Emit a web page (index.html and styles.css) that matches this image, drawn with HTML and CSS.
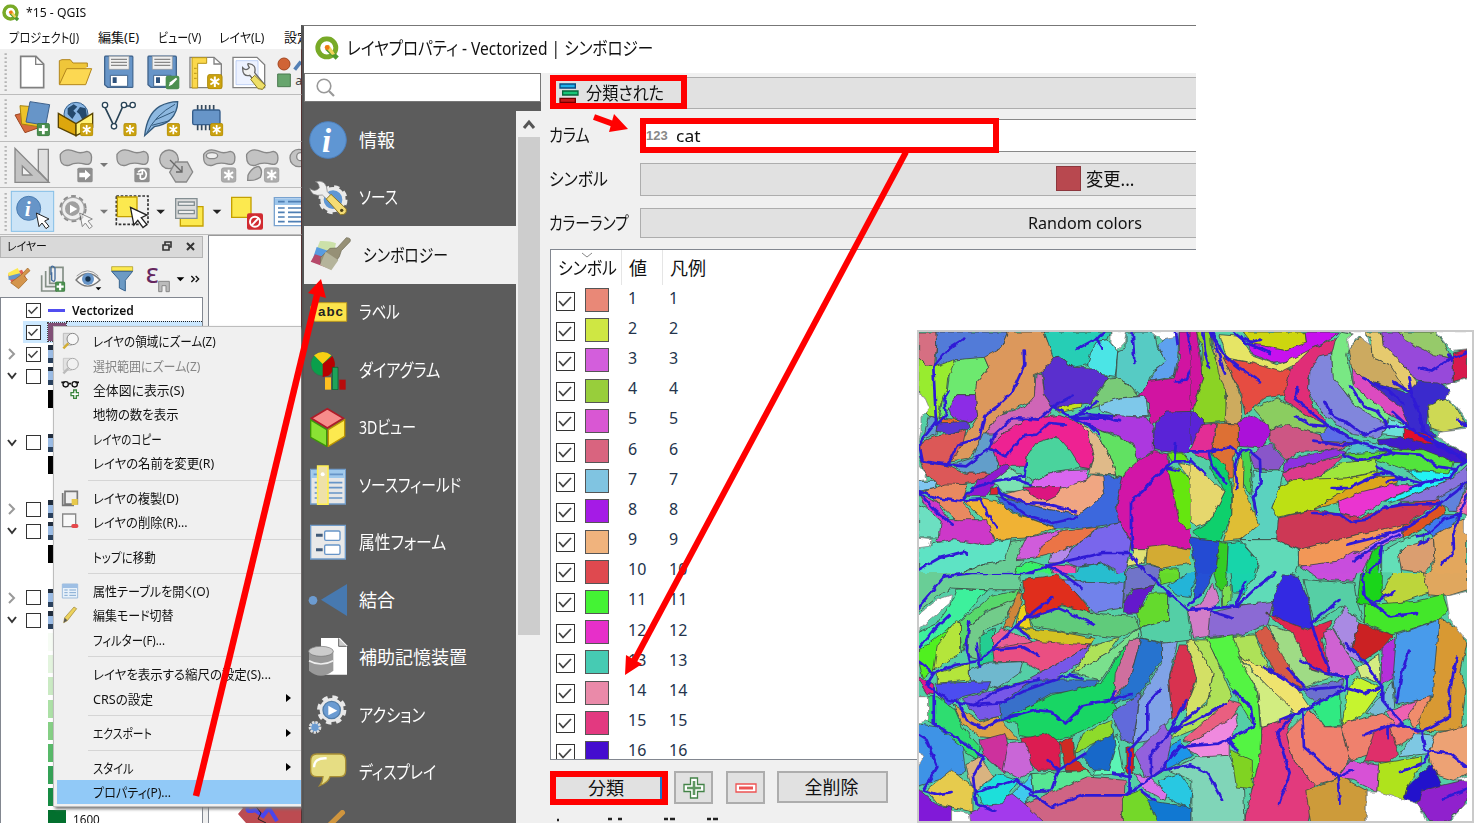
FILE: index.html
```html
<!DOCTYPE html>
<html lang="ja">
<head>
<meta charset="utf-8">
<title>QGIS</title>
<link rel="stylesheet" href="styles.css">
</head>
<body>
<svg class="defs" width="0" height="0">
  <defs>
    <symbol id="new" viewBox="0 0 38 38"><rect x="1" y="1" width="36" height="36" rx="6" fill="#cba20f" stroke="#a88500" stroke-width="2"/><path d="M19 6v26M8 12l22 14M30 12L8 26" stroke="#fff" stroke-width="5"/></symbol>
    <symbol id="newgrey" viewBox="0 0 38 38"><rect x="1" y="1" width="36" height="36" rx="6" fill="#adadad" stroke="#999" stroke-width="2"/><path d="M19 6v26M8 12l22 14M30 12L8 26" stroke="#fff" stroke-width="5"/></symbol>
    <symbol id="plus" viewBox="0 0 38 38"><rect x="1" y="1" width="36" height="36" rx="6" fill="#4c8f50" stroke="#34743a" stroke-width="2"/><path d="M19 6v26M6 19h26" stroke="#fff" stroke-width="8"/></symbol>
    <symbol id="cursor" viewBox="0 0 44 54"><path d="M3 3l38 18-13 6 13 16-9 7-12-17-9 11z" fill="#fff" stroke="#222" stroke-width="3"/></symbol>
    <symbol id="floppy" viewBox="0 0 90 98"><path d="M6 2h78q4 0 4 4v88q0 2-3 2H12L3 88V6q0-4 3-4z" fill="#6795c8" stroke="#41648c" stroke-width="4"/><path d="M16 3h60v39H16z" fill="#f0f0f0" stroke="#999" stroke-width="2"/><path d="M22 12h48M22 21h48M22 30h48" stroke="#888" stroke-width="4"/><path d="M20 60h52v33H20z" fill="#fff" stroke="#41648c" stroke-width="3"/><path d="M27 66h12v17H27z" fill="#2e527c"/></symbol>
    <symbol id="q" viewBox="0 0 72 70"><circle cx="34" cy="33" r="26" fill="none" stroke="#78aa27" stroke-width="14"/><path d="M34 34l30 29" stroke="#4f9a2c" stroke-width="13"/><path d="M28 29l12-5 18 27-9 3z" fill="#f0d35a"/><circle cx="35" cy="32" r="7" fill="#ee7913"/></symbol>
  </defs>
</svg>
<main class="stage">
  <section class="main-window">
    <header class="titlebar"><svg class="logo" viewBox="0 0 72 70"><use href="#q"/></svg><span data-w="60">*15 - QGIS</span></header>
    <nav class="menubar">
      <div class="m1"><span data-w="70">プロジェクト(J)</span></div><div class="m2"><span data-w="41">編集(E)</span></div><div class="m3"><span data-w="43">ビュー(V)</span></div><div class="m4"><span data-w="45">レイヤ(L)</span></div><div class="m5"><span data-w="26">設定</span></div>
    </nav>
    <div class="toolbar tb1">
      <svg viewBox="0 147 903 138" width="301" height="46">
        <path d="M17 160v114" class="grip"/>
        <path d="M62 169h46l23 23v71H62z" fill="#fff" stroke="#808080" stroke-width="5"/><path d="M107 170v23h23" fill="none" stroke="#808080" stroke-width="4"/>
        <path d="M178 252V182l8-3h25l8 10h43v12" fill="#efc63a" stroke="#b3861c" stroke-width="3"/><path d="M178 254l22-48h75l-18 48z" fill="#fcd852" stroke="#b3861c" stroke-width="3"/>
        <use href="#floppy" x="311" y="166" width="90" height="98"/>
        <use href="#floppy" x="441" y="166" width="90" height="98"/>
        <rect x="497" y="227" width="41" height="41" rx="6" fill="#4c8f50"/><path d="M506 259l4-12 18-14 4 4-16 17z" fill="#fff"/>
        <path d="M570 172h72l22 20v71h-94z" fill="#fff" stroke="#808080" stroke-width="4"/><path d="M642 172v20h22" fill="none" stroke="#808080" stroke-width="4"/><path d="M576 173h44v17h-27v74h-17z" fill="#fbd84b" stroke="#b89618" stroke-width="3"/><path d="M582 205h8M582 220h8M582 235h8" stroke="#b89618" stroke-width="3"/>
        <use href="#new" x="620" y="222" width="49" height="46"/>
        <path d="M699 172h72l23 22v69h-95z" fill="#fff" stroke="#808080" stroke-width="4"/><path d="M708 182h66v72h-66z" fill="#edf2ff" stroke="#a8c0f0" stroke-width="2"/><path d="M728 203q10 12 20 0-8-14-2-12 24 2 18 27l30 36-10 12-35-40q-22 5-21-23z" fill="#f2f2f2" stroke="#666" stroke-width="4"/><path d="M764 226l32 30-8 12-14-2-22-28z" fill="#eedf68" stroke="#8c7c22" stroke-width="3"/>
        <circle cx="852" cy="192" r="18" fill="#d06436" stroke="#a3451e" stroke-width="3"/><path d="M833 222h38v38h-38z" fill="#67a56d" stroke="#4b7a50" stroke-width="3"/><path d="M884 209l19-24" stroke="#5480b5" stroke-width="11"/><text x="886" y="256" font-size="38" fill="#444">a</text>
      </svg>
    </div>
    <div class="toolbar tb2">
      <svg viewBox="0 285 903 141" width="301" height="47">
        <path d="M17 298v114" class="grip"/>
        <path d="M45 345l60-15 20 50-50 18z" fill="#d66a3c" stroke="#9c4521" stroke-width="3"/><path d="M60 317l60 5-5 58-50-8z" fill="#edc32a" stroke="#a5830e" stroke-width="3"/><path d="M90 305l59 9-12 62-59-10z" fill="#6795c8" stroke="#3e618c" stroke-width="3"/><use href="#plus" x="110" y="369" width="40" height="40"/>
        <circle cx="228" cy="343" r="36" fill="#88b5e3" stroke="#35618d" stroke-width="3"/><path d="M203 325l18-12 11 7-12 12 8 8-11 17-14-15zM240 321l17 4 4 24-13 12-10-19-8-7z" fill="#24496d"/><path d="M175 340l53 31v36l-53-25z" fill="#dda70d" stroke="#594400" stroke-width="4"/><path d="M278 340l-50 31v36l50-25z" fill="#fff176" stroke="#594400" stroke-width="4"/><use href="#new" x="240" y="369" width="40" height="40"/>
        <path d="M315 322l27 56 27-60h29" fill="none" stroke="#284255" stroke-width="5"/><g fill="#fff" stroke="#284255" stroke-width="4"><circle cx="315" cy="315" r="8"/><circle cx="342" cy="379" r="8"/><circle cx="372" cy="315" r="8"/><circle cx="398" cy="315" r="8"/></g><use href="#new" x="370" y="369" width="40" height="40"/>
        <path d="M434 407q7-65 45-88 27-14 54-14 0 30-21 53-19 18-49 22z" fill="#8db8e0" stroke="#335a7d" stroke-width="4"/><path d="M440 400q25-55 85-87M455 376l55-14M467 359l56-25" fill="none" stroke="#335a7d" stroke-width="3"/><use href="#new" x="500" y="369" width="40" height="40"/>
        <path d="M593 315v76M605 315v76M617 315v76M629 315v76M641 315v50" stroke="#35485b" stroke-width="5"/><rect x="578" y="330" width="82" height="44" rx="5" fill="#6795c8" stroke="#355d8b" stroke-width="4"/><use href="#new" x="630" y="369" width="40" height="40"/>
      </svg>
    </div>
    <div class="toolbar tb3">
      <svg viewBox="0 426 903 138" width="301" height="46">
        <path d="M17 438v114" class="grip"/>
        <g fill="#c3c3c3" stroke="#888" stroke-width="4">
          <path d="M115 448h30v96l-30-32z" fill="#e0e0e0"/><path d="M45 445v102h102zM67 498l28 27H67z" fill-rule="evenodd"/>
          <path id="blob" d="M181 463q15-22 45-8 14 7 35-1 17 3 13 28-2 14-20 10-27-7-47 4-29 5-26-33z"/>
          <use href="#blob" x="170"/><circle cx="507" cy="478" r="28"/><path d="M527 486h35l16 30-19 30h-32l-18-29z"/>
          <use href="#blob" x="430"/><ellipse cx="636" cy="467" rx="17" ry="9" fill="#eee"/><use href="#blob" x="559"/><path d="M744 526q11-24 32-27 14 10 5 33-14 11-38 9z"/><circle cx="896" cy="474" r="26"/><circle cx="902" cy="470" r="12" fill="#eee"/>
        </g>
        <path d="M510 480l36 36m0-18v18h-18" fill="none" stroke="#666" stroke-width="4"/>
        <rect x="232" y="503" width="46" height="44" rx="5" fill="#8f8f8f"/><path d="M238 518h17v-9l17 16-17 16v-9h-17z" fill="#fff"/>
        <path d="M300 489h24l-12 12z" fill="#777"/><rect x="403" y="503" width="46" height="44" rx="5" fill="#8f8f8f"/><path d="M414 516q20-15 25 6 0 18-18 15M410 522h17v-13M421 537v-13" fill="none" stroke="#fff" stroke-width="5"/>
        <use href="#newgrey" x="662" y="502" width="48" height="46"/><use href="#newgrey" x="791" y="502" width="48" height="46"/>
      </svg>
    </div>
    <div class="toolbar tb4">
      <svg viewBox="0 564 903 141" width="301" height="47">
        <path d="M17 579v114" class="grip"/><rect x="34" y="574" width="127" height="120" fill="#cce4f7" stroke="#84bfe8" stroke-width="3"/>
        <circle cx="86" cy="625" r="36" fill="#6795c8" stroke="#4a7db2" stroke-width="3"/><text x="74" y="648" font-family="Liberation Serif" font-weight="bold" font-style="italic" font-size="64" fill="#fff">i</text><use href="#cursor" x="106" y="636" width="44" height="54"/>
        <circle cx="219" cy="626" r="34" fill="#e8e8e8" stroke="#8c8c8c" stroke-width="14" stroke-dasharray="13 9"/><circle cx="219" cy="626" r="34" fill="#eee" stroke="#a4a4a4" stroke-width="4"/><circle cx="217" cy="626" r="22" fill="#a0a0a0"/><path d="M210 614l22 13-22 13z" fill="#fff"/><use href="#cursor" x="236" y="636" width="44" height="54" opacity=".5"/>
        <path d="M300 629h24l-12 12z" fill="#777"/><path d="M469 629h26l-13 13zM638 629h26l-13 13z" fill="#222"/>
        <path d="M349 588h95v85h-95z" fill="none" stroke="#333" stroke-width="5" stroke-dasharray="8 5"/><path d="M352 591h59v59h-59z" fill="#fce94f" stroke="#c4a000" stroke-width="4"/><use href="#cursor" x="385" y="618" width="62" height="70"/>
        <path d="M541 620h68v58h-68z" fill="#fce94f" stroke="#c4a000" stroke-width="4"/><path d="M527 596h64v59h-64z" fill="#ddd" stroke="#848f93" stroke-width="4"/><path d="M535 606h48v10h-48zM535 631h48v10h-48z" fill="#eee" stroke="#848f93" stroke-width="4"/>
        <path d="M695 592h58v60h-58z" fill="#fce94f" stroke="#c4a000" stroke-width="4"/><rect x="741" y="640" width="48" height="49" rx="6" fill="#d12b31"/><circle cx="765" cy="665" r="15" fill="none" stroke="#fff" stroke-width="6"/><path d="M755 676l21-22" stroke="#fff" stroke-width="6"/>
        <path d="M823 593h100v84H823z" fill="#fff" stroke="#78a2cf" stroke-width="4"/><path d="M825 595h90v20h-90z" fill="#9cc5eb"/><path d="M834 605h20M864 605h40M834 624h20M864 624h40M834 637h20M864 637h40M834 651h20M864 651h40M834 665h20M864 665h40" stroke="#4e7fb4" stroke-width="5"/>
      </svg>
    </div>
    <div class="workspace">
      <aside class="layers">
        <header class="dock-title"><span data-w="40">レイヤー</span><svg width="44" height="20" viewBox="0 0 44 20"><path d="M5 8h6v5H5zM7 8V5h6v5h-2" fill="none" stroke="#333" stroke-width="1.6"/><path d="M29 6l7 7m0-7l-7 7" stroke="#333" stroke-width="2"/></svg></header>
        <svg class="dock-tools" viewBox="0 303 609 117" width="203" height="39">
          <path d="M24 353l42-15 14 28-44 14z" fill="#e25f54"/><path d="M24 348l29-15 10 20-36 8z" fill="#fce94f"/><path d="M25 358l34-9 7 14-40 6z" fill="#6495c9"/><path d="M90 341L73 357l9 11-26 27-24-18 32-24 19-20z" fill="#d4954c" stroke="#9c6223" stroke-width="2"/>
          <path d="M125 355v47h46M137 342v47h50M149 331h40v48h-40z" fill="#f0f0f0" stroke="#848f86" stroke-width="5"/><path d="M153 354v-21q2-11 12 0v33q-1 12-10 3v-23" fill="none" stroke="#436b9c" stroke-width="4"/><use href="#plus" x="165" y="373" width="31" height="32"/>
          <path d="M228 369q36-39 72 0-38 37-72 0z" fill="#f8f8f8" stroke="#777" stroke-width="4"/><circle cx="264" cy="366" r="18" fill="#6795c8"/><circle cx="264" cy="366" r="8" fill="#17334f"/><path d="M230 357q34-31 65 0" fill="none" stroke="#999" stroke-width="3"/><path d="M287 391h17l-9 9z"/>
          <path d="M335 329h63v13h-63z" fill="#fce94f" stroke="#a28f16" stroke-width="2"/><path d="M335 343h63l-22 27v32l-18-9v-24z" fill="#6c9ac4" stroke="#38638e" stroke-width="3"/>
          <text x="437" y="377" font-family="Noto Sans" font-size="82" fill="#65275f">ε</text><path d="M476 404v-31h32v31h-10v-18h-12v18z" fill="#bbb" stroke="#888" stroke-width="3"/><path d="M530 361h23l-12 12z"/><path d="M574 357l9 9-9 9m13-18l9 9-9 9" fill="none" stroke="#111" stroke-width="4"/>
        </svg>
        <div class="tree" id="tree"></div>
      </aside>
      <div class="canvas"><svg viewBox="0 0 93 19" width="93" height="19"><path d="M28 0l6 4-5 6 8 9h56V0z" fill="#bc4b51"/><path d="M40 0q-5 10 6 6l8 6 6-8 8 13" fill="none" stroke="#4a45ed" stroke-width="4"/><path d="M45 0l7 9-3 6 8 4" fill="none" stroke="#222"/></svg></div>
    </div>
    <div class="context-menu">
      <div class="item"><svg class="mi" viewBox="0 0 54 54"><path d="M7 4h24v36H7z" fill="#ddd" stroke="#aaa" stroke-width="2"/><circle cx="35" cy="21" r="17" fill="#f7f7f7" stroke="#888" stroke-width="3"/><path d="M22 34L7 49" stroke="#d2ad35" stroke-width="7"/></svg><span data-w="123">レイヤの領域にズーム(Z)</span></div>
      <div class="item off"><svg class="mi" viewBox="0 0 54 54"><path d="M7 4h24v36H7z" fill="#e2e2e2" stroke="#bbb" stroke-width="2"/><circle cx="35" cy="21" r="17" fill="#f1f1f1" stroke="#aaa" stroke-width="3"/><path d="M22 34L7 49" stroke="#bbb" stroke-width="7"/></svg><span data-w="107">選択範囲にズーム(Z)</span></div>
      <div class="item"><svg class="mi" viewBox="0 0 54 54"><path d="M1 4h10m13 4h6M43 4h11" stroke="#111" stroke-width="5"/><circle cx="14" cy="10" r="8" fill="none" stroke="#111" stroke-width="4"/><circle cx="41" cy="10" r="8" fill="none" stroke="#111" stroke-width="4"/><path d="M38 27h8v8h8v9h-8v8h-8v-8h-8v-9h8z" fill="#fff" stroke="#3a843e" stroke-width="4"/></svg><span data-w="91">全体図に表示(S)</span></div>
      <div class="item"><span data-w="86">地物の数を表示</span></div>
      <div class="item"><span data-w="69">レイヤのコピー</span></div>
      <div class="item"><span data-w="121">レイヤの名前を変更(R)</span></div>
      <hr>
      <div class="item"><svg class="mi" viewBox="0 0 54 54"><path d="M5 12v37h34M12 7h37v38H12z" fill="#eee" stroke="#777" stroke-width="5"/><rect x="32" y="30" width="18" height="18" fill="#e8c94b"/></svg><span data-w="86">レイヤの複製(D)</span></div>
      <div class="item"><svg class="mi" viewBox="0 0 54 54"><path d="M5 3h39v38H5z" fill="#f8f8f8" stroke="#888" stroke-width="4"/><rect x="31" y="33" width="21" height="12" rx="5" fill="#e5484b"/></svg><span data-w="95">レイヤの削除(R)...</span></div>
      <hr>
      <div class="item"><span data-w="63">トップに移動</span></div>
      <hr>
      <div class="item"><svg class="mi" viewBox="0 0 54 54"><path d="M4 6h46v42H4z" fill="#e8f1fa" stroke="#9ebcdc" stroke-width="3"/><path d="M4 6h46v12H4z" fill="#9ebfe4"/><path d="M10 24h10M25 24h20M10 32h10M25 32h20M10 40h10M25 40h20" stroke="#82a9d1" stroke-width="3"/></svg><span data-w="116">属性テーブルを開く(O)</span></div>
      <div class="item"><svg class="mi" viewBox="0 0 54 54"><path d="M39 3l8 5-28 36-11 6 3-15z" fill="#ecd25c" stroke="#998133" stroke-width="2"/><path d="M8 50l3-15 8 8z" fill="#555"/></svg><span data-w="80">編集モード切替</span></div>
      <div class="item"><span data-w="72">フィルター(F)...</span></div>
      <hr>
      <div class="item"><span data-w="178">レイヤを表示する縮尺の設定(S)...</span></div>
      <div class="item"><span data-w="60">CRSの設定</span><i class="sub"></i></div>
      <hr>
      <div class="item"><span data-w="59">エクスポート</span><i class="sub"></i></div>
      <hr>
      <div class="item"><span data-w="41">スタイル</span><i class="sub"></i></div>
      <div class="item hot"><span data-w="78">プロパティ(P)...</span></div>
    </div>
  </section>

  <section class="dialog">
    <header class="dialog-title"><svg class="logo" viewBox="0 0 72 70"><use href="#q"/></svg><span data-w="306">レイヤプロパティ - Vectorized | シンボロジー</span></header>
    <div class="dialog-body">
      <div class="side">
        <div class="search"><svg width="24" height="24" viewBox="0 0 24 24"><circle cx="10" cy="10" r="6.8" fill="none" stroke="#999" stroke-width="1.6"/><path d="M15 15l5 5" stroke="#999" stroke-width="2.2"/></svg></div>
        <div class="side-row">
          <nav class="tabs">
            <div class="tab"><svg viewBox="0 0 120 120"><circle cx="60" cy="60" r="55" fill="#5f96d3" stroke="#4d7fba" stroke-width="3"/><text x="42" y="95" font-family="Liberation Serif" font-weight="bold" font-style="italic" font-size="98" fill="#fff">i</text></svg><span data-w="36">情報</span></div>
            <div class="tab"><svg viewBox="0 0 120 120"><circle cx="75" cy="68" r="33" fill="#5f96d3" stroke="#e9e9e9" stroke-width="10"/><circle cx="75" cy="68" r="39" fill="none" stroke="#e9e9e9" stroke-width="9" stroke-dasharray="16 15"/><path d="M5 34q15 13 29-1-2-18-13-19Q56 5 58 44L76 62 66 76 43 54Q11 60 5 34z" fill="#ededed" stroke="#777" stroke-width="2"/><path d="M55 66l14-14 46 44q2 19-18 17z" fill="#f4dc74" stroke="#8a7625" stroke-width="3"/><circle cx="101" cy="100" r="5" fill="#4e421a"/></svg><span data-w="39">ソース</span></div>
            <div class="tab active"><svg viewBox="0 0 132 120"><path d="M36 18q30-1 48 7L68 92 14 73z" fill="#cce1a9"/><path d="M26 36l54 18-12 40-54-22z" fill="#589be0"/><path d="M21 58l51 16-7 27-57-21z" fill="#b6496a"/><path d="M115 8q16 1 11 12L100 47l-6 18-26 36-30-15-1-18 29-28 21-1z" fill="#969076" stroke="#6d6955" stroke-width="2"/><path d="M53 50l38 26-21 30-34-16z" fill="#b5b49b"/></svg><span data-w="85">シンボロジー</span></div>
            <div class="tab"><svg viewBox="0 0 120 120"><path d="M20 32h96v56H20L8 76V44z" fill="#fce34c" stroke="#bd9a1e" stroke-width="3"/><text x="30" y="71" font-family="Liberation Sans" font-weight="bold" font-size="40" textLength="75" fill="#222">abc</text></svg><span data-w="41">ラベル</span></div>
            <div class="tab"><svg viewBox="0 0 120 120"><circle cx="44" cy="42" r="36" fill="#0a9f4b" stroke="#555" stroke-width="2"/><path d="M44 42L18 16q27-20 52 0z" fill="#f8cf13"/><path d="M44 42l29-24q20 35-12 59l-17 4z" fill="#b90000"/><path d="M51 82h18v37H51z" fill="#ffbf21"/><path d="M73 52h17v67H73z" fill="#1fa35a" stroke="#075824" stroke-width="2"/><path d="M94 89h19v30H94z" fill="#b80c0c"/></svg><span data-w="81">ダイアグラム</span></div>
            <div class="tab"><svg viewBox="0 0 120 120"><path d="M58 5l48 29-48 29L10 34z" fill="#f78c8b" stroke="#af1c28" stroke-width="5"/><path d="M8 39l48 29v50L8 91z" fill="#8ae234" stroke="#3d9507" stroke-width="4"/><path d="M61 68l49-30v50l-49 30z" fill="#fce94f" stroke="#bd9500" stroke-width="4"/></svg><span data-w="57">3Dビュー</span></div>
            <div class="tab"><svg viewBox="0 0 120 120"><path d="M8 13h104v104H8z" fill="#e7e7e7" stroke="#719cc9" stroke-width="4"/><path d="M10 15h100v24H10z" fill="#9fc9ec"/><path d="M17 28h20m28 0h40M20 53h83M20 68h83M20 84h83M20 99h83" stroke="#6795c8" stroke-width="5"/><path d="M29 3h31v115H29z" fill="#efe1a8" stroke="#fff052" stroke-width="5"/><circle cx="44" cy="28" r="6" fill="#fff"/></svg><span data-w="102">ソースフィールド</span></div>
            <div class="tab"><svg viewBox="0 0 120 120"><path d="M8 10h104v101H8z" fill="#e9e9e9" stroke="#719cc9" stroke-width="4"/><path d="M24 40h20M24 83h20" stroke="#415b79" stroke-width="9"/><rect x="50" y="27" width="46" height="28" rx="4" fill="#fff" stroke="#6795c8" stroke-width="4"/><rect x="50" y="69" width="46" height="28" rx="4" fill="#fff" stroke="#6795c8" stroke-width="4"/></svg><span data-w="87">属性フォーム</span></div>
            <div class="tab"><svg viewBox="0 0 120 120"><circle cx="15" cy="61" r="13" fill="#6c9bd0"/><path d="M39 59L117 12v96z" fill="#4779b0"/></svg><span data-w="36">結合</span></div>
            <div class="tab"><svg viewBox="0 0 120 120"><path d="M39 3h57l21 22v88H39z" fill="#fff"/><path d="M92 4v24h24" fill="#ccc" stroke="#666" stroke-width="3"/><path d="M3 42v59q35 30 73 0V42z" fill="#999"/><ellipse cx="39" cy="43" rx="37" ry="15" fill="#ccc" stroke="#777" stroke-width="2"/><path d="M3 71q35 20 73 0" fill="none" stroke="#eee" stroke-width="5"/></svg><span data-w="108">補助記憶装置</span></div>
            <div class="tab"><svg viewBox="0 0 120 120"><circle cx="71" cy="45" r="33" fill="#e8e8e8" stroke="#e8e8e8" stroke-width="6"/><circle cx="71" cy="45" r="38" fill="none" stroke="#e8e8e8" stroke-width="12" stroke-dasharray="16 14"/><circle cx="71" cy="45" r="26" fill="#6a9bd2" stroke="#527da8" stroke-width="4"/><path d="M61 32l27 15-27 14z" fill="#fff"/><circle cx="21" cy="97" r="15" fill="#6a9bd2" stroke="#ddd" stroke-width="8" stroke-dasharray="7 3"/></svg><span data-w="66">アクション</span></div>
            <div class="tab"><svg viewBox="0 0 120 120"><path d="M26 6h69q18 0 18 19v31q0 18-19 18H66q-5 18-31 27 10-13 10-27H27Q8 74 8 57V26Q8 6 26 6z" fill="#e6dd83" stroke="#a88e35" stroke-width="4"/><path d="M18 46q0-29 38-27" fill="none" stroke="#fff" stroke-width="7"/></svg><span data-w="77">ディスプレイ</span></div>
            <div class="tab"><svg viewBox="0 0 120 120"><path d="M103 8L70 40 40 70" stroke="#cf953e" stroke-width="16" stroke-linecap="round"/></svg></div>
          </nav>
          <div class="scroll"><svg width="22" height="26" viewBox="0 0 22 26"><path d="M6 17l5-6 5 6" fill="none" stroke="#555" stroke-width="3"/></svg><div class="thumb"></div></div>
        </div>
      </div>
      <div class="form">
        <div class="combo"><svg width="22" height="22" viewBox="0 0 66 66"><path d="M6 6h46v12H6z" fill="#20b0e9" stroke="#074b83" stroke-width="4"/><path d="M14 27h46v12H14z" fill="#18c577" stroke="#05663a" stroke-width="4"/><path d="M6 49h46v12H6z" fill="#c51a1a" stroke="#730000" stroke-width="4"/></svg><span data-w="78">分類された</span><b class="mark"></b></div>
        <div class="field f1"><label><span data-w="41">カラム</span></label><div class="input"><em>123</em><span data-w="24">cat</span><b class="mark"></b></div></div>
        <div class="field f2"><label><span data-w="59">シンボル</span></label><div class="btn"><i class="color"></i><span data-w="48">変更...</span></div></div>
        <div class="field f3"><label><span data-w="80">カラーランプ</span></label><div class="btn"><span data-w="114">Random colors</span></div></div>
        <div class="list">
          <svg class="sort" width="12" height="6" viewBox="0 0 12 6"><path d="M1 1l5 4 5-4" fill="none" stroke="#888"/></svg>
          <div class="list-head"><div><span data-w="59">シンボル</span></div><div><span data-w="18">値</span></div><div><span data-w="36">凡例</span></div></div>
          <div id="classes"></div>
        </div>
        <div class="actions">
          <button class="classify"><span data-w="36">分類</span></button>
          <button class="sq"><svg width="24" height="24" viewBox="0 0 24 24"><path d="M8.500 2h7v6.500H22v7h-6.500V22h-7v-6.500H2v-7h6.500z" fill="#fff" stroke="#438347" stroke-width="1.3"/><path d="M12 5v14M5 12h14" stroke="#5f9862" stroke-width="2.600"/></svg></button>
          <button class="sq"><svg width="24" height="24" viewBox="0 0 24 24"><path d="M2 8h20v8H2z" fill="#fff" stroke="#ed5353" stroke-width="1.3"/><path d="M5 12h14" stroke="#ed5353" stroke-width="3"/></svg></button>
          <button class="clear"><span data-w="54">全削除</span></button>
        </div>
        <svg class="cut" width="180" height="5" viewBox="0 0 180 5"><path d="M7 3h2M58 2h4M68 2h4M114 2h4M120 2h5M157 2h4M163 2h5" stroke="#222" stroke-width="2.500"/></svg>
      </div>
    </div>
  </section>

  <svg class="map" width="557" height="493" viewBox="917 330 557 493">
    <defs>
      <filter id="rough" x="0" y="0" width="100%" height="100%" color-interpolation-filters="sRGB"><feTurbulence type="fractalNoise" baseFrequency=".17" numOctaves="1" seed="4"/><feDisplacementMap in="SourceGraphic" scale="5" xChannelSelector="R" yChannelSelector="G"/></filter>
      <clipPath id="ca"><path d="M0 0h822v736H0z"/></clipPath>
      <clipPath id="cb"><path d="M0 0h840v736H0z"/></clipPath>
      <clipPath id="cc"><path d="M0 0h1560v755H0z"/></clipPath>
      <clipPath id="all"><path d="M919 332h548v489H919z"/></clipPath>
    </defs>
    <rect x="918" y="331" width="555" height="491" fill="#fff" stroke="#cacaca" stroke-width="2"/>
    <g clip-path="url(#all)"><g filter="url(#rough)">
      <path d="M912 325h562v503H912z" fill="#54cfa6"/>
      <g id="ga" clip-path="url(#ca)" transform="translate(916 328) scale(.33333)"></g>
      <g id="gb" clip-path="url(#cb)" transform="translate(1190 328) scale(.33333)"></g>
      <g id="gc" clip-path="url(#cc)" transform="translate(916 573) scale(.3559 .3344)"></g>
    </g></g>
  </svg>
  <svg class="arrows" width="1474" height="823" viewBox="0 0 1474 823">
    <g stroke="red" fill="red"><path d="M196 796L317 295" stroke-width="6.500"/><path d="M906 152L633 663" stroke-width="6"/><path d="M594 117l22 8" stroke-width="6"/></g>
    <path d="M321 279l5 19-18-5zM625 675l1-20 16 9zM628 129l-14-15-5 18z" fill="red"/>
  </svg>
</main>
<script src="app.js"></script>
</body>
</html>
```
FILE: styles.css
```css
* { box-sizing: border-box; }
body { margin: 0; background: #fff; font-family: "Noto Sans", "Noto Sans CJK JP", sans-serif; color: #111; overflow: hidden; }
.defs { position: absolute; }
.stage { position: relative; width: 1474px; height: 823px; display: grid; grid-template-columns: 302px 894px; overflow: hidden; }
span[data-w] { display: inline-block; white-space: nowrap; transform-origin: left center; font-feature-settings: "palt"; flex: none; }
svg { display: block; flex: none; overflow: hidden; }

.main-window { position: relative; height: 823px; overflow: hidden; font-size: 13px; line-height: 18px; display: flex; flex-direction: column; }
.titlebar { height: 25px; padding: 0 2px; display: flex; align-items: center; gap: 6px; font-size: 12px; flex: none; }
.titlebar .logo { width: 18px; height: 18px; }
.menubar { height: 24px; display: grid; grid-template-columns: 89px 60px 61px 65px 1fr; padding-left: 9px; align-items: center; border-right: 1px solid #555; flex: none; overflow: hidden; }
.menubar div { overflow: hidden; white-space: nowrap; }
.toolbar { background: #f0f0f0; border-bottom: 1px solid #bcbcbc; border-right: 1px solid #533; flex: none; overflow: hidden; }
.tb1, .tb3 { height: 46px; }
.tb2, .tb4 { height: 47px; }
.grip { stroke: #b4b4b4; stroke-width: 7; stroke-dasharray: 5 7; fill: none; }
.workspace { flex: 1; display: flex; background: #f0f0f0; min-height: 0; border-right: 1px solid #533; }
.layers { width: 203px; display: flex; flex-direction: column; margin-right: 5px; }
.dock-title { height: 22px; flex: none; margin-top: 1px; background: #d9d9d9; border: 1px solid #b4b4b4; display: flex; align-items: center; padding: 0 0 0 6px; font-size: 12px; }
.dock-title svg { margin-left: auto; }
.tree { flex: 1; background: #fff; border: 1px solid #828790; border-bottom: 0; overflow: hidden; padding-top: 1px; }
.node { height: 22.15px; display: flex; align-items: center; padding-left: 4px; font-weight: 600; }
.node .arrow { width: 14px; margin-right: 7px; }
.box { width: 15px; height: 15px; border: 1.5px solid #333; background: #fff; flex: none; }
.node .box { margin-right: 7px; }
.node .none { border-color: transparent; background: none; }
.node .rule { width: 17px; height: 3px; background: #514ef0; margin-right: 7px; }
.node .chip { width: 18px; height: 18px; margin-right: 7px; }
.node.small { font-weight: 400; }
.node.picked { background: linear-gradient(90deg, #fff 22px, #cce8ff 22px); }
.node.picked .chip { outline: 1px dotted #444; background: #804f76; margin-right: 0; }
.node.picked::after { content: ""; align-self: flex-start; flex: 1; border-top: 1px dotted #222; }
.strip { background: linear-gradient(#202c3c 25%, #9bbce5 25% 70%, #29405d 70%); }
.canvas { flex: 1; background: #fff; border-left: 1px solid #828790; border-top: 1px solid #999; display: flex; align-items: flex-end; overflow: hidden; }
.context-menu { position: absolute; left: 53px; top: 325.500px; width: 248px; height: 481px; background: #f0f0f0; border: 1px solid #bdbdbd; border-right: 0; padding: 2.500px 0 0 3px; box-shadow: 2px 2px 3px #777; }
.item { height: 24.4px; display: flex; align-items: center; padding-left: 36px; position: relative; }
.item.off { color: #868686; }
.item.hot { background: #91c9f7; }
.mi { width: 18px; height: 18px; margin: 0 14px 0 -32px; }
.context-menu hr { height: 1px; border: 0; background: #d5d5d5; margin: 4.5px 0 4.6px 31px; }
.sub { position: absolute; right: 10px; top: 8px; border: 4px solid transparent; border-left: 5px solid #000; border-right: 0; }

.dialog { height: 798px; margin-top: 25px; border-left: 2px solid #555; border-top: 1px solid #777; display: flex; flex-direction: column; font-size: 18px; line-height: 24px; min-width: 0; }
.dialog-title { height: 47px; flex: none; display: flex; align-items: center; padding: 0 0 3px 11px; gap: 8px; background: #fff; }
.dialog-title span { margin-left: -1px; }
.dialog-title .logo { width: 25px; height: 25px; }
.dialog-body { flex: 1; min-height: 0; display: grid; grid-template-columns: 237px 655px; background: #f0f0f0; }
.side { display: flex; flex-direction: column; min-height: 0; }
.search { height: 29px; background: #fff; border: 1px solid #777; padding: 2px 9px; flex: none; }
.side-row { height: 721px; display: grid; grid-template-columns: 212px 25px; background: #5c5c5c; overflow: hidden; flex: none; }
.tabs { padding-top: 9px; color: #fff; }
.tab { height: 57.5px; display: flex; align-items: center; padding-left: 4px; gap: 11px; }
.tab svg { width: 40px; height: 40px; }
.tab.active { background: #f0f0f0; color: #111; }
.tab.active svg { width: 44px; height: 40px; }
.scroll { margin-top: 9px; background: #f0f0f0; padding-left: 2px; }
.thumb { width: 22px; height: 498px; background: #cdcdcd; }
.form { padding: 4px 0 0 9px; display: flex; flex-direction: column; min-width: 0; min-height: 0; }
.combo, .btn { background: #e1e1e1; border: 1px solid #adadad; border-right: 0; display: flex; align-items: center; }
.combo { height: 32px; padding-left: 7px; gap: 6px; position: relative; flex: none; }
.mark { position: absolute; border: 6px solid red; }
.combo .mark { left: -1px; top: -3px; width: 137px; height: 34px; }
.field { display: grid; grid-template-columns: 90px 1fr; align-items: center; flex: none; }
.field label { margin-left: -1px; padding-bottom: 1px; }
.f1 { margin-top: 10px; height: 33px; }
.f2 { margin-top: 11px; height: 33px; }
.f3 { margin-top: 12px; height: 30px; }
.field > * { height: 100%; display: flex; align-items: center; }
.input { background: #fff; border: 1px solid #888; border-right: 0; position: relative; padding-left: 5px; font-size: 16px; gap: 8px; }
.input em { font: bold 13px "Liberation Sans", sans-serif; color: #888; }
.input .mark { left: -1px; top: -2px; width: 359px; height: 35px; }
.f2 .btn { padding: 0 0 2px 415px; gap: 5px; }
.f3 .btn { padding-left: 387px; font-size: 17px; }
.color { width: 25px; height: 25px; background: #b8484f; border: 1px solid #8d373d; }
.list { height: 511px; margin-top: 11px; flex: none; background: #fff; border: 1px solid #828790; border-right: 0; position: relative; overflow: hidden; }
.sort { position: absolute; left: 30px; top: 2px; }
.list-head { height: 35px; display: grid; grid-template-columns: 71px 41px 1fr; align-items: center; }
.list-head div { padding-left: 7px; height: 100%; display: flex; align-items: center; border-right: 1px solid #e5e5e5; }
.list-head div:last-child { border: 0; }
.row { height: 30.2px; display: grid; grid-template-columns: 29px 43px 41px 1fr; padding-left: 5px; align-items: center; font-size: 16px; }
.row .box { width: 19px; height: 19px; margin-top: 2px; }
.row .sw { width: 24px; height: 24px; border: 1px solid #555; }
.row > span { margin-top: -5px; color: #24344c; }
.actions { display: flex; margin-top: 11px; height: 34px; flex: none; }
button { background: #e1e1e1; border: 2px solid #adadad; font: 18px/22px "Noto Sans", "Noto Sans CJK JP", sans-serif; padding: 0; display: flex; align-items: center; justify-content: center; color: #111; }
.classify { width: 118px; height: 34px; margin-right: 6px; border: 6px solid red; box-shadow: inset -2px 0 #1675ce; padding-right: 6px; }
.sq { width: 39px; height: 33px; margin-right: 13px; }
.clear { width: 111px; height: 32px; margin-left: -1px; padding-right: 2px; }
.cut { margin-top: 12px; }
.map, .arrows { position: absolute; }
.map { left: 917px; top: 330px; }
.map polygon { stroke: #3d4540; stroke-width: .8px; vector-effect: non-scaling-stroke; }
.map polygon.gap { stroke: #888; }
.map polyline { fill: none; stroke: #2f1ad6; stroke-width: 2.7px; vector-effect: non-scaling-stroke; stroke-linejoin: round; stroke-linecap: round; }
.arrows { left: 0; top: 0; }
```
FILE: app.js
```js
const tick = '<svg width="12" height="12" viewBox="0 0 12 12"><path d="M1.5 6l3 3.2L10.5 3" fill="none" stroke="#444" stroke-width="1.6"/></svg>';
const tickBig = '<svg width="16" height="16" viewBox="0 0 16 16"><path d="M2 8l4 4.5L14 4" fill="none" stroke="#444" stroke-width="1.8"/></svg>';

// Layer tree: expander, checkbox state, chip colour, label
const nodes = [
  ['', 'on', 'rule', '<span data-w="62">Vectorized</span>'], ['', 'on', 'picked', ''], ['>', 'on', 'strip', ''], ['v', 'off', 'strip', ''],
  ['', '', '#000', ''], ['', '', '', ''], ['v', 'off', 'strip', ''], ['', '', '#000', ''], ['', '', '', ''],
  ['>', 'off', 'strip', ''], ['v', 'off', 'strip', ''], ['', '', '#000', ''], ['', '', '', ''], ['>', 'off', 'strip', ''], ['v', 'off', 'strip', ''],
  ['', '', '#f6fcf4', ''], ['', '', '#e3f4de', ''], ['', '', '#caeac3', ''], ['', '', '#ace0a6', ''], ['', '', '#86cf85', ''],
  ['', '', '#58b969', ''], ['', '', '#34a156', ''], ['', '', '#168b43', ''], ['', '', '#03702e', '<span data-w="27">1600</span>']
];
const paths = { '>': 'M4 2l5 5-5 5', 'v': 'M3 4l4 5 4-5' };
document.getElementById('tree').innerHTML = nodes.map(([a, c, k, t]) => {
  const arrow = `<svg class="arrow" width="14" height="14" viewBox="0 0 14 14"><path d="${a ? paths[a] : ''}" fill="none" stroke="${a === '>' ? '#999' : '#333'}" stroke-width="2"/></svg>`;
  const chip = k === 'rule' ? '<i class="rule"></i>' : k === 'strip' ? '<i class="chip strip"></i>' : `<i class="chip" style="background:${k === 'picked' ? '' : k}"></i>`;
  return `<div class="node ${k === 'picked' ? 'picked' : ''} ${t.includes('1600') ? 'small' : ''}">${arrow}<div class="box ${c ? '' : 'none'}">${c === 'on' ? tick : ''}</div>${chip}${t}</div>`;
}).join('');

const swatches = ['#e98877', '#cfe743', '#d35edc', '#98ce3b', '#d957d3', '#d9647f', '#80c4e1', '#a51be6', '#f0b37d', '#df494f', '#44f334', '#e72fc9', '#46cbb3', '#ea8aa9', '#e33980', '#440dcf'];
document.getElementById('classes').innerHTML = swatches.map((c, i) =>
  `<div class="row"><div class="box">${tickBig}</div><div class="sw" style="background:${c}"></div><span>${i + 1}</span><span>${i + 1}</span></div>`).join('');

// Catchments: one per line, fill then vertices. "~" starts a stream, "#fff" an area without data.
const A = `
#d66f82 8,12 60,12 62,50 55,115 35,115 8,90
#527bd8 60,12 275,12 255,60 205,92 60,115 62,50
#98ec2f 8,90 35,115 60,115 115,95 120,110 95,150 90,200 75,225 65,270 40,265 20,245 8,200
#6de96f 120,95 205,88 218,118 182,160 180,200 120,200 90,265 70,270 80,210 95,180 100,140
#8c2ce6 120,200 178,200 185,265 165,285 110,268 100,240
#629eca 40,265 65,270 60,320 20,335
#dc985c 275,12 385,12 395,40 412,60 415,95 380,130 355,140 358,215 260,255 220,300 210,320 160,390 100,400 120,350 165,300 185,265 178,200 182,160 218,118 205,88 255,60
#26ceb5 385,12 585,12 575,35 545,40 515,110 470,118 430,85 412,88
#5a2fce 412,88 430,85 470,118 530,120 575,150 545,190 525,225 410,240 385,200 380,130
#cf66b6 360,140 378,135 385,200 410,238 395,265 330,275 270,310 240,340 222,355 215,310 250,260 330,235 355,205
#4be5e6 545,40 575,35 605,70 598,145 560,140 515,110 525,70
#56cbc4 630,12 715,12 725,60 755,100 710,130 700,160 670,200 640,170 600,150 605,70 630,60
#5ea1ef 745,35 790,12 785,90 775,145 705,160 715,130 750,100 725,50
#d114a1 790,12 840,12 840,250 750,255 700,295 700,225 665,205 700,160 775,150 790,90
#79cb78 525,220 550,190 575,150 600,148 640,170 665,205 610,210 520,245
#7ec8ea 550,230 610,210 690,205 697,265 620,270 550,245
#c6e01c 415,240 500,222 495,240 430,255
#ac38df 480,275 550,260 690,268 712,300 712,370 665,395 655,355 600,320 545,305
#5a23d7 715,290 750,252 840,250 840,375 740,370 712,365
#ee2292 222,355 270,310 330,275 430,262 480,280 515,310 535,385 520,425 495,420 440,350 410,328 370,345 335,380 325,415 250,415
#4ad39d 410,328 430,330 465,370 495,418 420,430 350,460 325,440 335,380 360,345
#dfba89 480,280 520,300 560,345 590,400 600,440 520,438 535,385 515,310
#61e162 545,305 600,325 655,350 665,400 655,435 625,450 600,445 590,400 560,345
#d215a7 715,370 755,378 760,420 790,440 795,550 835,610 830,662 645,665 640,630 600,570 610,470 630,430 665,400
#6ae60f 755,375 800,375 820,400 765,400
#e3d66b 785,405 840,415 840,590 825,560 830,500 815,440
#65e60f 755,420 785,420 820,450 830,500 825,560 838,600 810,605 790,580
#dc5857 15,345 60,325 150,305 140,350 100,410 60,410 15,395
#dc5858 15,400 100,415 140,435 235,435 185,460 135,470 80,475 30,440
#629eca 200,318 235,318 225,355 245,405 245,435 150,435 105,410 170,390
#ec6a26 70,270 130,275 130,290 80,290
#5a35d4 65,285 155,280 160,300 100,318 60,310
#9218cf 145,505 185,460 270,408 282,420 245,455 210,505
#7be2b3 230,460 280,420 300,435 330,450 320,490 260,490
#d966ef 350,460 420,430 515,425 515,455 450,480 340,475
#f0a682 255,500 320,485 390,520 440,480 515,455 530,440 565,445 565,495 530,530 490,560 400,545 300,520
#dc1580 320,478 435,475 420,505 390,520 345,500
#3c68dd 240,505 400,545 490,560 530,530 565,495 560,440 620,450 600,540 610,585 510,600 420,600 340,570 270,540
#f0b234 145,520 200,510 245,520 280,550 420,600 330,630 240,635 200,570
#e98960 25,490 90,468 155,470 140,520 180,580 130,585 60,520
#80c7f1 8,460 65,460 60,480 8,490
#cd38c9 10,500 60,520 100,575 210,575 245,655 150,655 60,640 75,580 25,530
#6cdfc1 8,530 40,545 75,580 70,630 8,630
#5ee3c4 8,655 60,645 110,635 200,650 285,632 275,700 200,710 100,750 8,750
#69ce96 285,640 330,635 325,690 295,735 295,750 100,750 200,710 265,700
#d05cdb 330,630 440,605 360,690 300,695
#eb7446 360,690 380,650 440,610 550,597 490,645 400,680
#b489e9 400,705 410,675 470,655 440,705
#7966ec 440,700 470,660 550,600 610,585 645,640 640,670 625,745 560,705 480,715
#e0e274 630,715 655,665 695,665 685,705
#d3ab33 695,655 745,650 830,665 830,705 740,720 690,705
#7074c9 635,720 690,710 740,720 720,750 630,750
#dc2531 225,480 248,480 245,500 222,500
#27bdcf 490,715 560,705 620,750 480,750
#38f168 345,700 395,715 415,750 290,750 300,720
#ec4bb0 400,710 480,715 480,750 420,750
#68dd2b 730,725 790,722 790,750 730,750
#fff 0,195 25,205 40,240 15,270 15,310 8,340 0,340
#fff 0,400 25,430 30,455 0,460
#fff 0,630 45,635 40,655 0,660
#fff 585,8 632,8 625,45 605,65 585,45
#fff 700,8 792,8 780,25 735,35
~ 145,32 100,60 52,118 60,280 20,330 10,350 20,400 95,410
~ 323,65 325,110 290,190 250,230 205,265 190,330 125,350 95,410
~ 95,410 150,415 220,362 270,385 320,325 360,320 400,285 450,290
~ 220,362 235,320 290,270 370,275 410,235 470,203
~ 410,235 470,270 545,220
~ 460,265 500,258 590,265
~ 470,270 560,268 615,280
~ 470,270 520,290 548,318
~ 100,190 85,215 90,265 60,290
~ 10,490 60,510 135,520 170,480 240,458 325,445 330,405
~ 290,450 345,470
~ 245,480 260,510 330,560 410,585 485,568
~ 250,495 330,525 400,530 480,550
~ 135,518 195,515 215,560 240,595
~ 10,495 60,550 110,590
~ 8,725 70,690 145,670 150,680
~ 135,740 330,738 400,712 470,695 560,675 640,675 700,750
~ 390,712 480,750
~ 650,665 645,600 645,520 680,490 715,450 750,420 775,400 840,400
~ 565,12 545,30 485,62
~ 540,30 560,60
~ 650,12 655,105
~ 780,12 785,50
~ 815,12 830,110 810,158 780,160
~ 780,345 775,395 750,420 785,430`;
const B = `
#cf14a0 0,12 20,12 40,150 10,240 0,250
#5a23d7 0,250 30,255 45,290 25,345 0,350
#8bd324 20,12 60,12 65,60 105,170 112,280 45,285 10,250 38,150 35,60
#cdab5e 60,12 85,50 120,130 155,210 155,290 105,285 110,200 85,130
#e64c41 100,90 190,105 305,125 290,200 225,210 165,260 155,200 125,140
#e6e565 90,20 150,25 190,85 260,110 290,100 345,62 360,65 320,110 280,130 190,105 110,90
#cdd60f 160,12 345,12 350,50 290,65 190,50
#c711ee 345,12 445,12 420,35 360,65 290,100 250,105 190,80 170,45 290,65 350,45
#e02d77 440,30 430,80 380,95 355,150 365,230 410,280 405,295 280,215 300,125 360,65
#8186dc 425,75 430,140 490,230 570,260 590,290 570,330 490,320 400,260 355,190 360,130 385,85
#79e884 435,40 450,12 490,20 470,80 490,170 600,260 590,290 500,235 430,150 425,80
#ccaa60 475,65 510,25 545,50 550,90 600,110 655,185 600,180 520,150 485,120
#e6ca6e 525,12 575,12 580,50 640,110 680,160 680,195 650,190 600,110 550,90 545,40
#9749da 575,12 625,12 700,60 790,95 790,165 740,175 680,155 620,90 580,50
#96ca6a 625,12 735,12 765,50 785,90 730,80 650,40
#d81a4c 790,75 832,65 832,150 790,160
#3a2acd 520,150 650,195 685,160 740,165 780,185 770,210 715,230 710,290 745,330 700,320 640,290 600,220
#dc4bc0 487,120 520,150 570,190 630,235 655,290 600,260 530,205 490,170
#ced954 712,235 760,212 800,240 830,295 760,310 720,300
#401acc 565,335 640,328 730,335 830,375 830,405 730,400 650,365 570,350
#6be0d9 575,320 600,275 650,290 640,328
#e20f2a 640,300 730,325 725,348 640,330
#8bcd60 190,240 262,210 330,250 400,285 410,315 350,310 270,290 235,310 215,270
#ab11d9 145,285 180,260 235,290 240,320 215,360 145,355
#dd7034 80,285 145,288 145,350 130,390 130,450 110,450 65,370
#e32d95 20,320 35,290 78,285 65,370 60,400 0,370
#cd5684 240,305 290,290 390,320 400,340 490,345 450,365 330,370 290,395 240,340
#5b6ee8 390,320 420,290 490,330 500,345 400,340
#52c1ca 460,380 500,335 590,350 620,370 560,380
#8956c9 180,385 215,355 240,345 285,395 270,425 195,425
#8d30e0 290,395 440,362 470,375 390,400 330,415 280,432
#dc3a8b 275,435 330,415 460,385 440,405 370,455 290,460
#9ee63c 370,455 450,405 560,395 560,430 470,450
#bde014 245,540 270,475 310,455 470,450 580,430 560,450 440,500 370,545 260,568
#dca51c 370,545 440,500 550,445 630,445 620,465 510,495 440,525
#ea34d0 445,520 520,490 600,470 690,470 580,520 500,570 450,555
#22f2f5 580,522 700,465 650,430 800,425 790,450 680,495 600,525
#52e43c 555,395 600,365 700,365 790,400 780,435 650,425
#56d936 470,378 590,370 540,400 490,400
#8873dc 620,520 790,450 832,410 832,480 740,520
#cd3855 265,570 370,545 460,560 510,570 580,540 640,525 760,515 640,595 500,620 330,665 255,635
#f29757 325,665 500,620 640,590 630,620 520,665 440,700 350,715 325,710
#de5321 640,595 760,530 765,555 700,600 640,630
#3f7aed 700,600 760,560 810,560 780,600 730,625
#5bd2bf 190,430 280,430 270,475 245,540 265,570 260,635 150,635 200,590 185,500
#43d54e 150,365 178,365 185,430 180,500 160,470
#dfbe35 150,385 162,400 160,480 205,590 150,635 100,640 125,560 130,450
#0ed06c 55,370 105,410 125,480 125,560 90,640 30,635 10,610 60,580 105,490 60,420
#e6d76d 0,405 45,440 105,490 60,580 20,595 0,580
#244bd3 0,630 30,635 90,640 75,745 20,745
#34cd25 90,640 115,645 110,745 75,745
#17d5aa 115,645 150,640 205,700 190,745 110,745
#60dab8 150,635 260,635 325,665 325,710 310,745 200,745 205,700
#c84ddd 330,715 440,700 490,670 550,670 510,745 370,745
#1ad524 550,665 575,655 565,745 520,745
#63dfb8 575,670 630,640 700,615 700,640 630,670 635,745 575,745
#da9e70 625,680 650,655 730,630 735,690 705,735 635,725
#e3a75d 730,625 820,570 830,620 830,745 715,745 735,690
#c073f1 490,680 560,640 635,600 640,625 560,660
#ee74b0 790,550 832,480 832,565
#6083dd 740,510 832,460 800,550 780,550
#fff 447,8 525,8 540,50 505,25 475,65 470,35 490,18
#fff 735,8 836,8 836,65 790,70 765,45
#fff 836,150 790,165 770,172 780,190 765,212 800,235 836,290
#fff 745,310 836,300 836,380 780,350 745,330
#fff 836,560 820,575 820,610 836,625
~ 40,12 45,70 57,120
~ 60,12 80,60 105,140
~ 65,12 100,80 150,120 210,160
~ 130,12 170,45 240,75
~ 155,25 185,42 210,35
~ 322,180 315,215 355,245 410,290 510,345 610,375
~ 315,265 360,290 410,295
~ 370,338 450,352 500,345
~ 403,222 430,265 480,290 520,320 590,295 650,297
~ 483,175 520,235 560,250 600,300
~ 608,252 660,300 730,345 830,400
~ 520,150 600,190 640,230
~ 610,162 665,195 690,260 700,310 740,340 830,400
~ 655,145 665,195
~ 687,120 725,128 780,92 830,75
~ 775,80 785,95
~ 805,275 830,295
~ 460,380 510,398 610,375 690,380 740,415 800,425
~ 425,480 480,480 560,440 600,435
~ 560,415 620,445 690,465 780,450 800,420 830,400
~ 590,460 650,450
~ 660,480 700,465
~ 370,555 450,560 480,582 530,575 580,540 640,530 750,528 800,490 830,460
~ 470,650 570,625 640,605 680,580 750,530
~ 680,625 710,620 760,575 810,560 830,500
~ 685,650 715,635
~ 810,560 790,620 792,670 755,710
~ 490,700 560,650 630,620
~ 575,655 570,700 525,740
~ 0,370 55,370 120,358 145,375 175,365 210,395 212,460 190,510 200,560
~ 55,370 65,410 110,470
~ 0,395 45,440
~ 145,375 135,410 142,480
~ 255,735 240,750`;
const C = `
#69ce96 0,-5 290,-5 295,50 200,50 100,45 60,70 0,120
#3df09c 0,180 60,150 100,90 115,48 200,50 120,150 0,240
#57d86a 120,150 210,70 295,50 270,90 200,110 150,160 130,240
#72cc8a 150,160 200,115 290,75 240,150 190,170 180,260 145,250
#7182eb 410,20 585,30 580,105 500,118 450,60
#27bdcf 410,-5 590,-5 585,30 470,28
#e02e1c 300,20 400,5 450,60 495,120 410,95 345,135 305,130
#d0863a 285,60 300,60 290,110 270,160 245,165
#ecd31a 290,110 305,90 325,165 280,160
#60cb7b 320,140 410,98 500,120 615,130 625,165 570,195 440,180 330,160
#d3c222 290,165 400,175 500,195 490,218 350,210
#7074c9 590,-5 690,-5 670,40 605,50 583,90
#6418cc 585,90 610,50 670,40 640,80 625,120 583,120
#64da2d 620,120 660,60 710,60 710,140 630,165
#65d92a 680,-5 740,-5 740,20 690,35
#23b4d8 710,40 770,-5 790,-5 770,70 730,65
#54cfa6 710,65 760,100 775,200 700,210 635,195 630,165 710,140
#2450d5 790,-5 835,-5 810,60 780,80
#34cc23 835,-5 875,-5 870,50 850,50
#18d3ad 885,-5 960,-5 940,60 890,60
#7cde50 860,50 885,30 885,80 862,105
#d27dc8 765,110 800,90 835,30 855,80 830,110 825,190 780,195
#5fdbb8 900,95 960,-5 1060,-5 1000,90
#8b6ad4 825,120 920,95 1005,85 985,155 915,185 820,190
#ca4ddd 1100,-5 1240,-5 1230,25 1130,18
#56cfa5 1090,20 1230,30 1240,90 1260,150 1195,100 1120,150
#3329e2 1030,5 1075,10 1105,90 1115,170 1060,155 1000,130 1005,70
#1ad51a 1250,-5 1310,-5 1310,70 1285,95 1240,90
#bdd53b 1310,60 1340,-5 1425,-5 1440,60 1330,100
#e0a75e 1425,-5 1550,-5 1550,50 1490,70 1440,65
#43e72a 1260,95 1400,85 1480,65 1495,110 1470,140 1340,185 1260,150
#50f01f 0,240 110,150 70,230 50,290 20,315
#b4e53b 110,145 125,150 125,240 50,290 60,215
#b4e53b 60,300 150,270 150,320 60,330
#24cd92 180,190 220,165 225,270 180,275
#e95e93 215,190 240,165 330,205 290,225 215,225
#ea4f82 215,225 340,205 490,215 400,270 350,295 300,265 220,265
#6fb8ce 150,290 200,270 300,265 290,300 230,345 150,320
#4c4df0 55,330 210,325 200,350 130,370 90,400 60,360
#7757e8 130,375 300,325 400,270 490,215 470,260 400,310 300,370 230,430 180,440
#3870ca 235,390 330,320 520,320 480,350 380,360 240,445
#aee258 440,300 490,220 570,195 540,240
#7ae08d 440,300 540,240 625,165 625,190 580,225 520,320
#18d664 285,450 240,440 380,365 520,330 585,220 600,225 550,370 565,410 530,440 430,490 370,505 290,485
#cf6f9e 600,200 632,195 600,320 555,375 560,300
#2673cf 632,195 690,210 690,260 625,370 550,390 600,320
#80a3e7 690,210 735,205 710,320 720,430 660,500 610,510 630,370 690,270
#d8324f 740,215 760,215 790,310 760,400 720,440 710,320
#d3e065 760,205 780,200 835,300 820,380 760,440 760,400 790,320
#aee158 780,200 820,200 890,370 800,460 710,500 760,430 820,390 835,300
#54f443 815,195 890,185 920,260 960,360 970,500 965,610 945,615 900,530 880,500 950,460 900,370
#aee158 890,190 950,185 990,280 1080,330 1080,350 1020,320 910,250
#e0264e 985,120 1100,170 1170,140 1140,200 1165,300 1110,290 1060,185
#d65a46 950,180 985,160 1060,280 1090,350 1010,300
#9fdb85 990,155 1060,180 1110,290 1170,310 1090,340 1030,250
#cf62d2 1145,175 1170,165 1240,290 1200,320 1160,290
#a98ae3 1170,160 1205,100 1245,150 1225,220 1255,270 1220,250
#cb2123 1245,150 1340,185 1310,225 1260,260 1225,225
#b52fd9 1310,225 1345,190 1350,310 1305,335
#d4ec81 1240,285 1300,245 1305,330 1250,310
#489beb 1350,185 1470,140 1460,310 1450,370 1350,395 1340,320
#efe36e 910,250 1060,330 1105,400 1060,420 980,330
#d2ed80 905,250 980,330 1060,410 1040,435 970,460 960,350
#6c70cf 1080,345 1200,320 1190,360 1120,385
#30ea82 1110,400 1190,355 1195,455 1150,460
#c6f42f 1195,460 1215,345 1240,310 1310,345 1260,420
#77bbd6 1265,420 1340,325 1345,400 1310,425
#ef816d 1195,450 1310,420 1370,460 1420,470 1360,515 1220,560
#ee62b1 1320,415 1410,380 1400,430 1350,455
#ef816d 1040,480 1105,410 1150,460 1195,460 1220,555 1180,615 1120,635 1060,560
#f08c6c 1380,430 1410,380 1445,370 1440,430 1400,465
#d89933 1470,135 1530,170 1548,210 1530,300 1545,350 1530,470 1420,475 1410,440 1450,370
#df2f6a 1260,565 1285,480 1330,455 1355,540 1330,565
#7ec8e3 1355,550 1400,480 1460,485 1440,540
#eda274 1460,480 1558,455 1558,595 1510,620 1450,600 1440,540
#e23a7d 970,460 1060,430 1040,480 1060,560 1120,635 1100,755 920,755 950,620 965,560
#d751d6 1180,615 1220,560 1300,575 1295,655 1230,620
#afe31c 1300,570 1420,550 1420,575 1380,640 1370,680 1295,655
#2212cc 1380,640 1450,570 1480,640 1400,690 1370,680
#9021cd 1410,690 1420,650 1558,615 1545,690 1490,745 1440,740
#cd9b3a 1095,650 1195,610 1265,650 1265,755 1110,755
#80d5b8 710,590 800,545 880,545 920,640 925,755 775,755 775,620
#80d322 885,530 945,560 945,645 900,640
#ef89de 750,520 900,420 905,450 880,500 880,545 800,550
#e95f80 750,500 880,380 915,390 880,440 770,505
#1c95ea 690,540 740,500 780,545 690,595
#616adb 550,420 630,360 610,510 580,500
#9361dd 615,540 700,450 720,490 700,590 650,620
#5bf4b5 500,605 565,480 585,600
#d41c22 590,520 612,520 610,600 590,595
#1768c9 465,550 550,460 560,520 540,590 500,590
#8edb2b 445,540 470,480 550,440 555,480
#ce2b23 405,505 440,490 450,560 495,600 420,590
#dc1c51 295,495 370,480 405,510 405,590 340,590 300,530
#dca347 105,395 180,445 230,430 290,500 180,490 130,450
#2edd70 0,370 60,370 110,410 130,460 180,520 175,560 100,510 50,450 0,430
#3e93e6 0,450 60,460 130,520 140,595 60,620 0,640
#cd319d 180,500 250,480 260,520 250,600 190,545
#c966d7 260,510 310,505 330,590 290,615 245,590
#d9b380 140,570 180,550 225,620 170,655 150,620
#8119d8 0,640 60,695 100,700 100,755 0,755
#e6cb4d 30,650 100,590 160,640 160,715 60,690
#a33aec 145,720 270,660 320,690 370,755 160,755
#1ddfda 170,650 230,600 290,620 240,690 190,695
#40caee 270,660 325,600 330,655 305,690
#57e693 325,600 480,590 500,610 420,670 330,650
#cf6484 305,690 480,610 590,620 585,755 370,755
#74d829 580,670 630,650 680,710 680,755 580,755
#1178d2 650,680 775,700 775,755 685,755
#28c8e2 680,620 740,600 775,650 770,705 700,670
#da73ea 615,600 660,615 705,660 700,680 640,645
#dd198f 0,310 50,330 50,365 30,360
#fff 0,130 60,80 100,65 95,90 40,140 0,180
#fff 0,370 35,370 35,440 0,450
#fff 0,520 20,550 0,590
#fff 100,710 150,720 155,758 100,758
#fff 1265,655 1300,655 1410,690 1440,758 1265,758
#fff 1490,70 1566,50 1566,215 1530,180 1500,140
#fff 1566,600 1515,620 1566,620
#fff 1566,690 1545,690 1485,758 1566,758
~ 8,225 50,170 95,125
~ 0,110 80,10 160,0 330,0
~ 150,145 140,230 150,265
~ 8,265 50,300 110,275 180,262 300,140 380,75
~ 170,210 180,280
~ 300,140 400,105 500,155
~ 280,160 320,195
~ 215,230 300,222 345,248
~ 50,300 30,335 90,380 160,395 230,350 345,318
~ 160,395 235,390 310,350 430,305 465,315
~ 50,345 50,450 110,490 190,550 160,610 170,690 220,713
~ 120,385 140,440 190,465 235,440 340,410 380,415 420,450 470,395 540,380 605,362
~ 545,380 560,355
~ 8,485 30,500 60,580 20,650
~ 20,650 60,662 100,655
~ 170,655 280,620 330,655 380,650 400,590 475,540
~ 370,560 400,590
~ 320,660 380,700 470,665 590,665 690,590 770,575 820,600 860,680
~ 600,660 600,530 650,470 650,390 685,350
~ 660,610 660,540 710,480 760,380
~ 710,480 795,405
~ 715,475 790,440 870,390
~ 690,585 740,520 850,510 950,460 940,400 895,355
~ 880,500 900,530
~ 555,600 600,610
~ 410,0 465,45
~ 650,0 710,60 765,110 900,100 960,40 1010,0
~ 830,115 890,135
~ 765,95 800,65
~ 900,95 925,25
~ 1020,440 1100,405 1210,345 1260,360 1310,340 1260,265 1205,210
~ 1310,340 1310,380 1370,455 1420,475 1430,530 1500,540 1548,580
~ 1260,485 1330,455 1370,455
~ 1420,475 1500,430 1500,350 1520,250
~ 1350,390 1365,300 1385,235
~ 1165,300 1140,240 1110,150 1190,80
~ 980,280 1040,320 1080,350 1200,340
~ 1045,285 1090,340
~ 1080,260 1150,300 1210,310 1210,345
~ 1085,410 1090,520 1185,610 1190,690
~ 1060,425 1015,480 1050,600 1020,690
~ 1185,610 1225,590
~ 1255,0 1260,70 1330,130 1405,120
~ 1360,595 1430,565 1440,530
~ 1480,675 1548,645
~ 630,650 670,680
~ 1285,90 1345,55
~ 1325,455 1325,495`;
const draw = (id, src) => {
  const tag = line => {
    const [fill, ...pts] = line.split(' ');
    return fill === '~' ? `<polyline points="${pts.join(' ')}"/>` : `<polygon fill="${fill}"${fill === '#fff' ? ' class="gap"' : ''} points="${pts.join(' ')}"/>`;
  };
  document.getElementById(id).innerHTML = src.trim().split('\n').map(tag).join('');
};
draw('ga', A);
draw('gb', B);
draw('gc', C);

document.querySelectorAll('span[data-w]').forEach(el => {
  const want = +el.dataset.w, have = el.offsetWidth;
  el.style.transform = `scaleX(${want / have})`;
  el.style.marginRight = `${want - have}px`;
});
```
